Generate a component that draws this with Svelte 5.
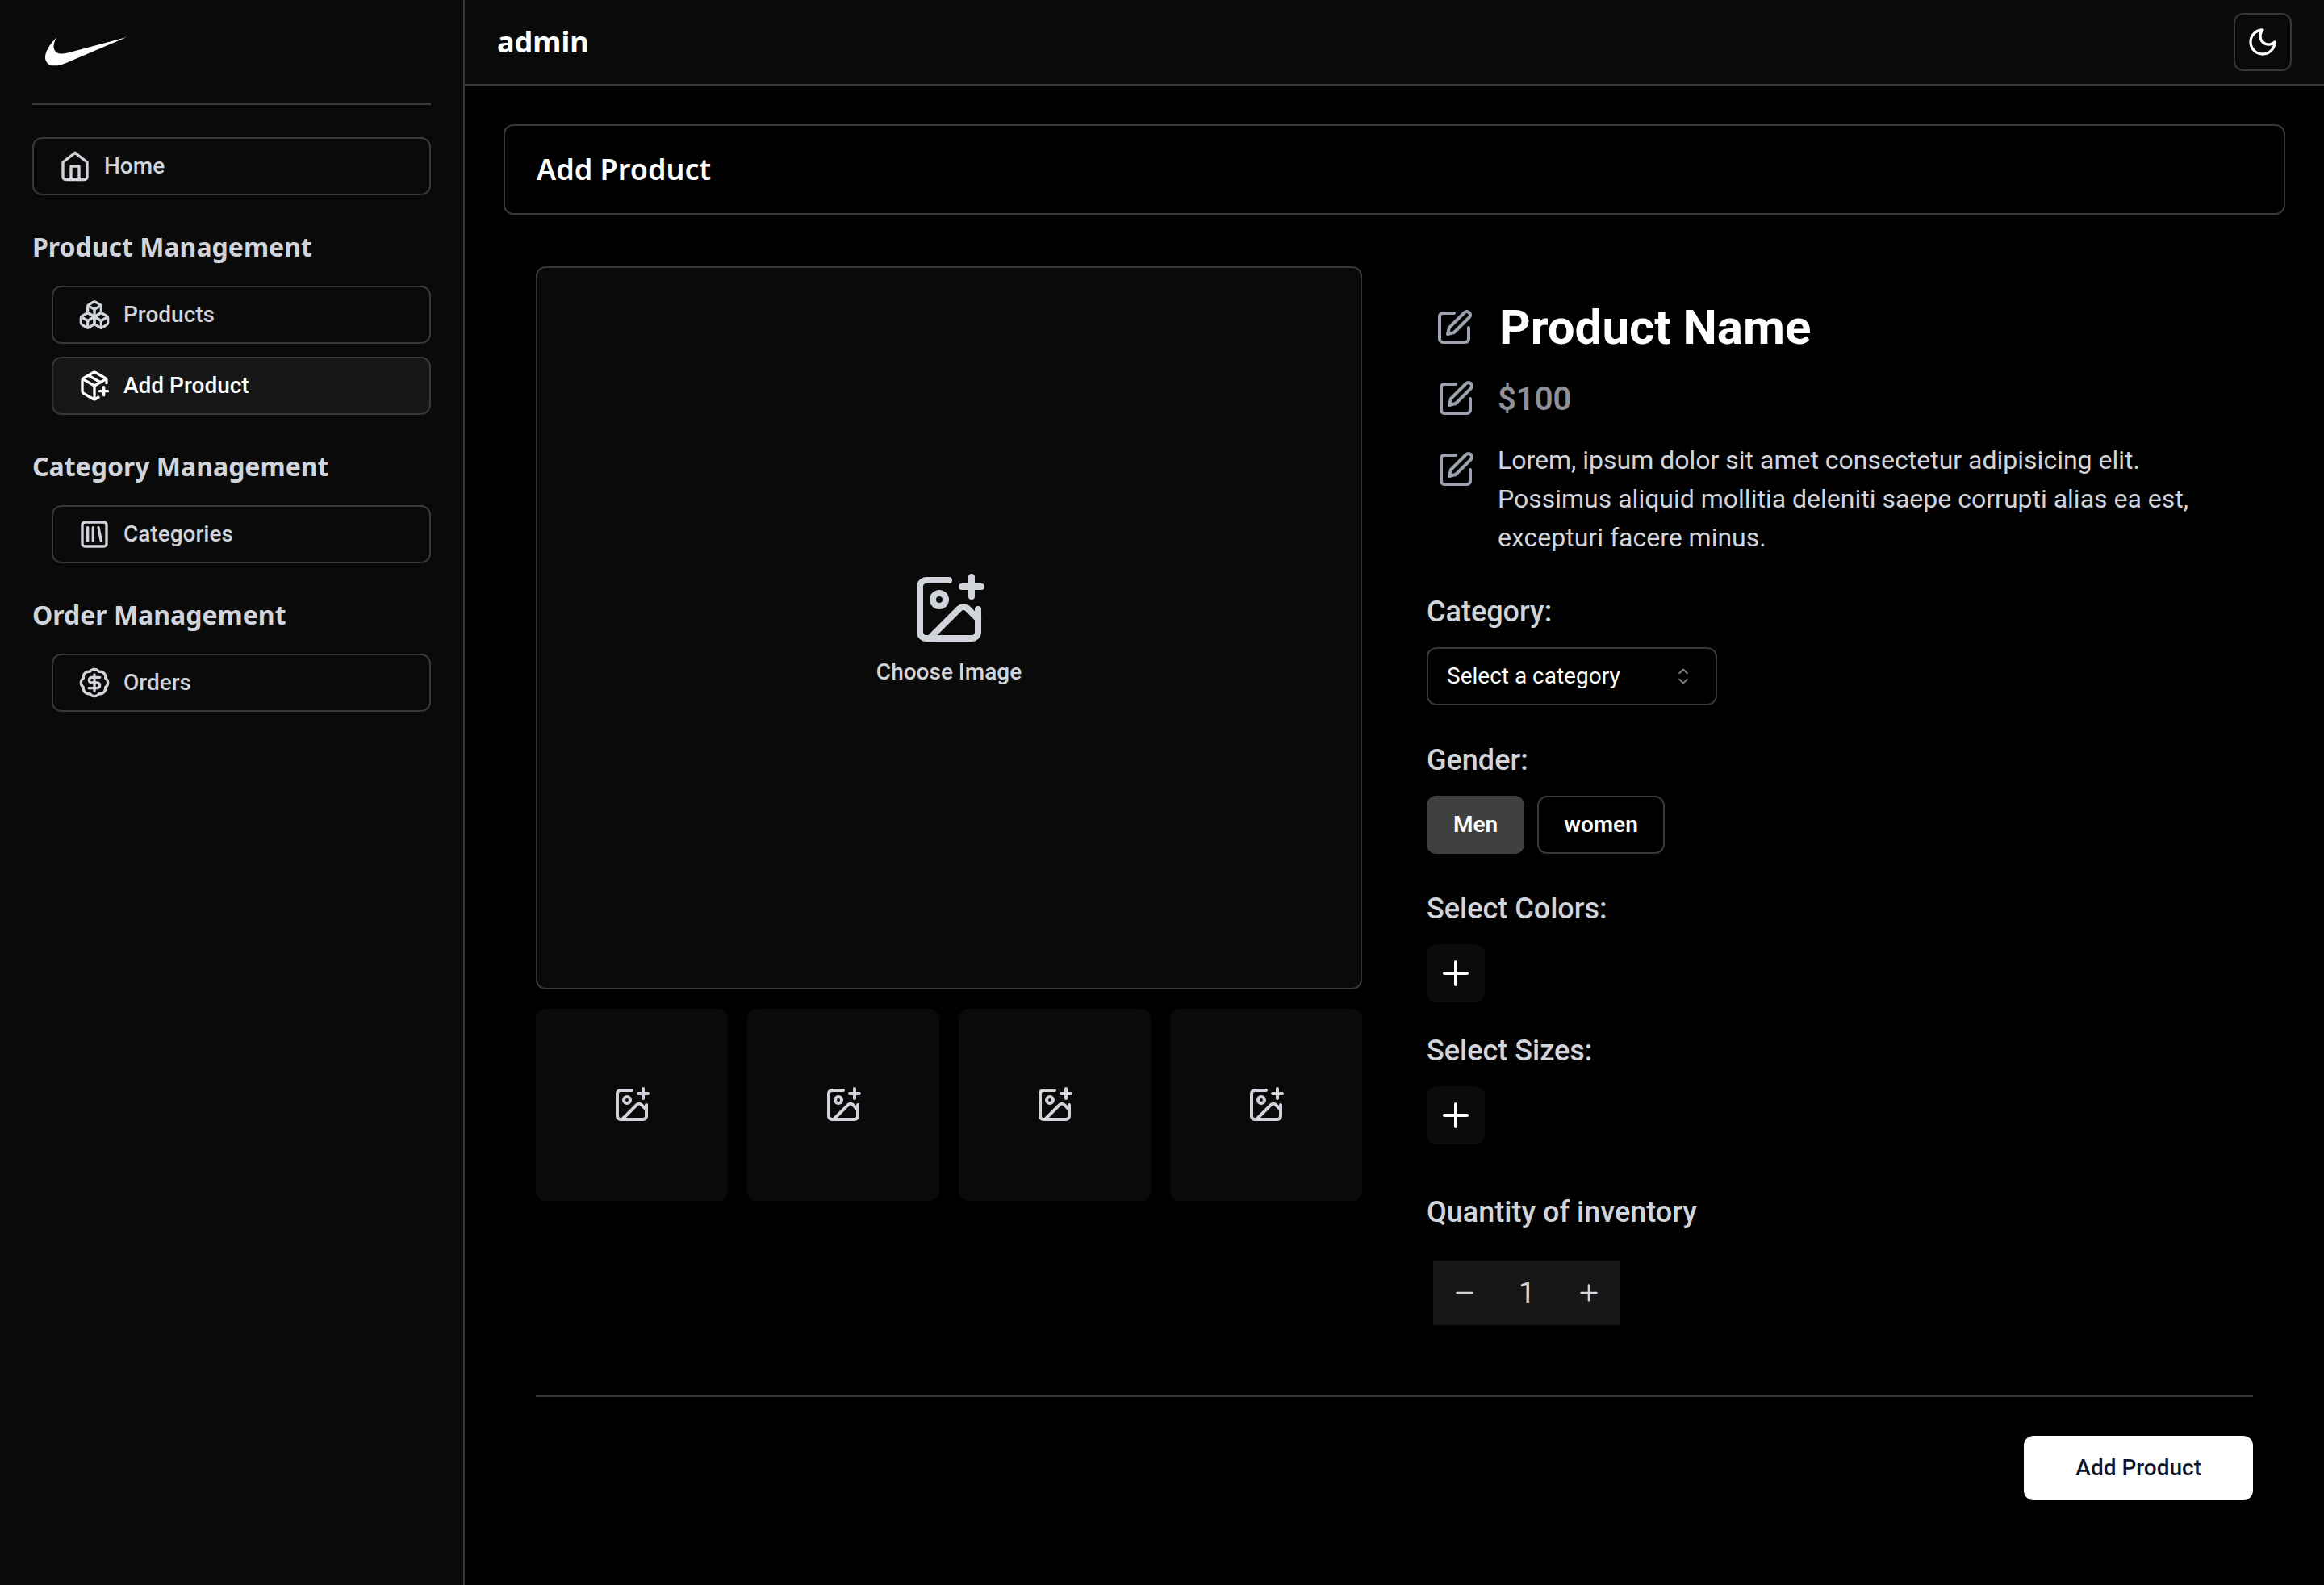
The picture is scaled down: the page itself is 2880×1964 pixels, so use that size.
<script>
  const groups = [
    { title: 'Product Management', items: [
      { label: 'Products', icon: 'boxes' },
      { label: 'Add Product', icon: 'packagePlus', active: true }
    ] },
    { title: 'Category Management', items: [{ label: 'Categories', icon: 'library' }] },
    { title: 'Order Management', items: [{ label: 'Orders', icon: 'badge' }] }
  ];

  const paths = {
    home: ['m3 9 9-7 9 7v11a2 2 0 0 1-2 2H5a2 2 0 0 1-2-2z', 'M9 22V12h6v10'],
    boxes: [
      'M2.97 12.92A2 2 0 0 0 2 14.63v3.24a2 2 0 0 0 .97 1.71l3 1.8a2 2 0 0 0 2.06 0L12 19v-5.5l-5-3-4.03 2.42Z',
      'm7 16.5-4.74-2.85', 'm7 16.5 5-3', 'M7 16.5v5.17',
      'M12 13.5V19l3.97 2.38a2 2 0 0 0 2.06 0l3-1.8a2 2 0 0 0 .97-1.71v-3.24a2 2 0 0 0-.97-1.71L17 10.5l-5 3Z',
      'm17 16.5-5-3', 'm17 16.5 4.74-2.85', 'M17 16.5v5.17',
      'M7.97 4.42A2 2 0 0 0 7 6.13v4.37l5 3 5-3V6.13a2 2 0 0 0-.97-1.71l-3-1.8a2 2 0 0 0-2.06 0l-3 1.8Z',
      'M12 8 7.26 5.15', 'm12 8 4.74-2.85', 'M12 13.5V8'
    ],
    packagePlus: [
      'M16 16h6', 'M19 13v6',
      'M21 10V8a2 2 0 0 0-1-1.73l-7-4a2 2 0 0 0-2 0l-7 4A2 2 0 0 0 3 8v8a2 2 0 0 0 1 1.73l7 4a2 2 0 0 0 2 0l2-1.14',
      'm7.5 4.27 9 5.15', 'M3.29 7 12 12l8.71-5', 'M12 22V12'
    ],
    library: [
      'M5 3h14a2 2 0 0 1 2 2v14a2 2 0 0 1-2 2H5a2 2 0 0 1-2-2V5a2 2 0 0 1 2-2z',
      'M7 7v10', 'M11 7v10', 'm15 7 2 10'
    ],
    badge: [
      'M3.85 8.62a4 4 0 0 1 4.78-4.77 4 4 0 0 1 6.74 0 4 4 0 0 1 4.78 4.78 4 4 0 0 1 0 6.74 4 4 0 0 1-4.77 4.78 4 4 0 0 1-6.75 0 4 4 0 0 1-4.78-4.77 4 4 0 0 1 0-6.76Z',
      'M16 8h-6a2 2 0 1 0 0 4h4a2 2 0 1 1 0 4H8', 'M12 18V6'
    ],
    moon: ['M12 3a6 6 0 0 0 9 9 9 9 0 1 1-9-9Z'],
    imagePlus: [
      'M21 12v7a2 2 0 0 1-2 2H5a2 2 0 0 1-2-2V5a2 2 0 0 1 2-2h7',
      'M16 5h6', 'M19 2v6', 'M7 9a2 2 0 1 0 4 0a2 2 0 1 0-4 0',
      'm21 15-3.086-3.086a2 2 0 0 0-2.828 0L6 21'
    ],
    edit: [
      'M12 3H5a2 2 0 0 0-2 2v14a2 2 0 0 0 2 2h14a2 2 0 0 0 2-2v-7',
      'M18.375 2.625a2.121 2.121 0 1 1 3 3L12 15l-4 1 1-4Z'
    ],
    plus: ['M5 12h14', 'M12 5v14'],
    minus: ['M5 12h14']
  };

  let gender = $state('Men');
  let quantity = $state(1);
</script>

{#snippet icon(name, size)}
  <svg class="icon {size}" viewBox="0 0 24 24" aria-hidden="true">
    {#each paths[name] as d}<path {d} />{/each}
  </svg>
{/snippet}

<div class="app">
  <aside class="sidebar">
    <a class="logo" href="#home" aria-label="Nike">
      <svg viewBox="0 7.8 24 8.4" aria-hidden="true">
        <path d="M24 7.8L6.442 15.276c-1.456.616-2.679.925-3.668.925-1.12 0-1.933-.392-2.437-1.177-.317-.504-.41-1.143-.28-1.918.13-.775.476-1.6 1.036-2.478.467-.71 1.232-1.643 2.297-2.8a6.122 6.122 0 00-.784 1.848c-.28 1.195-.028 2.072.756 2.632.373.261.886.392 1.54.392.522 0 1.11-.084 1.764-.252L24 7.8z" />
      </svg>
    </a>
    <nav>
      <a class="nav-link" href="#home">{@render icon('home', 'md')}Home</a>
      {#each groups as group}
        <h2>{group.title}</h2>
        <div class="group">
          {#each group.items as item}
            <a class="nav-link" class:active={item.active} href="#{item.icon}">
              {@render icon(item.icon, 'md')}{item.label}
            </a>
          {/each}
        </div>
      {/each}
    </nav>
  </aside>

  <div class="main">
    <header>
      <span class="user">admin</span>
      <button class="theme" aria-label="Toggle theme">{@render icon('moon', 'md')}</button>
    </header>

    <main>
      <div class="title"><h1>Add Product</h1></div>

      <form class="content" onsubmit={(e) => e.preventDefault()}>
        <div class="columns">
          <section class="images">
            <button type="button" class="hero">
              {@render icon('imagePlus', 'xl')}
              <span>Choose Image</span>
            </button>
            <div class="thumbs">
              {#each [1, 2, 3, 4] as n}
                <button type="button" class="thumb" aria-label="Choose image {n}">{@render icon('imagePlus', 'lg')}</button>
              {/each}
            </div>
          </section>

          <section class="details">
            <div class="row name-row">
              <button type="button" class="edit" aria-label="Edit name">{@render icon('edit', 'lg')}</button>
              <h2 class="name">Product Name</h2>
            </div>
            <div class="row">
              <button type="button" class="edit" aria-label="Edit price">{@render icon('edit', 'lg')}</button>
              <p class="price">$100</p>
            </div>
            <div class="row">
              <button type="button" class="edit" aria-label="Edit description">{@render icon('edit', 'lg')}</button>
              <p class="description">Lorem, ipsum dolor sit amet consectetur adipisicing elit. Possimus aliquid mollitia deleniti saepe corrupti alias ea est, excepturi facere minus.</p>
            </div>

            <div class="field">
              <label class="label" for="category">Category:</label>
              <div class="select">
                <select id="category">
                  <option>Select a category</option>
                </select>
                <svg viewBox="0 0 15 15" aria-hidden="true">
                  <path d="M4.93179 5.43179C4.75605 5.60753 4.75605 5.89245 4.93179 6.06819C5.10753 6.24392 5.39245 6.24392 5.56819 6.06819L7.49999 4.13638L9.43179 6.06819C9.60753 6.24392 9.89245 6.24392 10.0682 6.06819C10.2439 5.89245 10.2439 5.60753 10.0682 5.43179L7.81819 3.18179C7.73379 3.0974 7.61933 3.04999 7.49999 3.04999C7.38064 3.04999 7.26618 3.0974 7.18179 3.18179L4.93179 5.43179ZM10.0682 9.56819C10.2439 9.39245 10.2439 9.10753 10.0682 8.93179C9.89245 8.75606 9.60753 8.75606 9.43179 8.93179L7.49999 10.8636L5.56819 8.93179C5.39245 8.75606 5.10753 8.75606 4.93179 8.93179C4.75605 9.10753 4.75605 9.39245 4.93179 9.56819L7.18179 11.8182C7.35753 11.9939 7.64245 11.9939 7.81819 11.8182L10.0682 9.56819Z" />
                </svg>
              </div>
            </div>

            <div class="field" role="group" aria-labelledby="gender-label">
              <span class="label" id="gender-label">Gender:</span>
              <div class="options">
                {#each ['Men', 'women'] as option}
                  <button type="button" class="option" class:selected={gender === option} aria-pressed={gender === option} onclick={() => (gender = option)}>{option}</button>
                {/each}
              </div>
            </div>

            <div class="field">
              <span class="label">Select Colors:</span>
              <button type="button" class="add" aria-label="Add color">{@render icon('plus', 'lg')}</button>
            </div>

            <div class="field tight">
              <span class="label">Select Sizes:</span>
              <button type="button" class="add" aria-label="Add size">{@render icon('plus', 'lg')}</button>
            </div>

            <div class="field stock">
              <label class="label" for="quantity">Quantity of inventory</label>
              <div class="stepper">
                <button type="button" aria-label="Decrease" onclick={() => (quantity = Math.max(1, quantity - 1))}>{@render icon('minus', 'sm')}</button>
                <input id="quantity" type="text" inputmode="numeric" bind:value={quantity} />
                <button type="button" aria-label="Increase" onclick={() => (quantity += 1)}>{@render icon('plus', 'sm')}</button>
              </div>
            </div>
          </section>
        </div>

        <div class="footer">
          <button type="submit" class="submit">Add Product</button>
        </div>
      </form>
    </main>
  </div>
</div>

<style>
  :global(body) {
    margin: 0;
    background: #000;
  }

  .app {
    --line: #383838;
    --panel: #0a0a0a;
    --muted: #d1d5db;
    display: grid;
    grid-template-columns: 20% 1fr;
    min-height: 100vh;
    background: #000;
    color: #fff;
    font: 400 28px/40px Roboto, sans-serif;
  }

  .app :global(*) {
    box-sizing: border-box;
  }

  h1, h2, p {
    margin: 0;
  }

  button, input, select {
    margin: 0;
    padding: 0;
    border: 0;
    background: none;
    color: inherit;
    font: inherit;
  }

  button {
    display: flex;
    align-items: center;
    justify-content: center;
    cursor: pointer;
  }

  .icon {
    flex: none;
    fill: none;
    stroke: currentColor;
    stroke-width: 2;
    stroke-linecap: round;
    stroke-linejoin: round;
  }

  .sm { width: 32px; height: 32px; }
  .md { width: 40px; height: 40px; }
  .lg { width: 48px; height: 48px; }
  .xl { width: 96px; height: 96px; }

  .sidebar {
    padding: 0 40px;
    border-right: 2px solid var(--line);
    background: var(--panel);
  }

  .logo {
    display: flex;
    align-items: center;
    height: 130px;
    padding: 0 16px;
    border-bottom: 2px solid var(--line);
  }

  .logo svg {
    width: 101px;
    fill: #fff;
  }

  nav {
    padding-top: 40px;
  }

  nav h2 {
    padding: 42px 0 26px;
    color: var(--muted);
    font: 700 32px/44px "Noto Sans", sans-serif;
  }

  .group {
    display: grid;
    gap: 16px;
    padding-left: 24px;
  }

  .nav-link {
    display: flex;
    align-items: center;
    gap: 16px;
    height: 72px;
    padding: 0 31px;
    border: 2px solid var(--line);
    border-radius: 12px;
    color: var(--muted);
    font-weight: 500;
    text-decoration: none;
  }

  .nav-link.active {
    background: #171717;
    color: #fff;
  }

  header {
    display: flex;
    align-items: center;
    justify-content: space-between;
    height: 106px;
    padding: 0 40px;
    border-bottom: 2px solid var(--line);
    background: var(--panel);
  }

  .user {
    font: 700 36px/56px "Noto Sans", sans-serif;
  }

  .theme {
    width: 72px;
    height: 72px;
    border: 2px solid var(--line);
    border-radius: 12px;
  }

  main {
    padding: 48px;
  }

  .title {
    padding: 26px 39px;
    border: 2px solid var(--line);
    border-radius: 12px;
  }

  h1 {
    font: 600 36px/56px "Noto Sans", sans-serif;
  }

  .content {
    padding: 64px 40px 0;
  }

  .columns {
    display: grid;
    grid-template-columns: 1fr 1fr;
    gap: 80px;
    padding-bottom: 87px;
  }

  .images {
    display: flex;
    flex-direction: column;
    gap: 24px;
    color: var(--muted);
  }

  .hero {
    flex-direction: column;
    gap: 14px;
    height: 896px;
    border: 2px solid var(--line);
    border-radius: 12px;
    background: var(--panel);
    font-weight: 500;
    line-height: 32px;
  }

  .thumbs {
    display: grid;
    grid-template-columns: repeat(4, 1fr);
    gap: 24px;
  }

  .thumb {
    aspect-ratio: 1;
    border-radius: 12px;
    background: var(--panel);
  }

  .details {
    padding-top: 40px;
    color: var(--muted);
  }

  .row {
    display: flex;
    gap: 16px;
  }

  .row + .row {
    margin-top: 16px;
  }

  .edit {
    flex: none;
    width: 72px;
    height: 72px;
    color: #9ca3af;
  }

  .name-row {
    gap: 22px;
  }

  .name-row .edit {
    width: 68px;
  }

  .name {
    color: #fff;
    font-size: 60px;
    font-weight: 700;
    line-height: 72px;
  }

  .price {
    color: #8f9196;
    font-size: 40px;
    font-weight: 600;
    line-height: 74px;
    height: 72px;
  }

  .description {
    font-size: 32px;
    line-height: 48px;
  }

  .field {
    display: flex;
    flex-direction: column;
    align-items: flex-start;
    gap: 16px;
    margin-top: 40px;
  }

  .field.tight {
    margin-top: 32px;
  }

  .field.stock {
    gap: 32px;
    margin-top: 56px;
  }

  .label {
    font-size: 36px;
    font-weight: 500;
    line-height: 56px;
  }

  .select {
    display: grid;
    width: 360px;
    color: #fff;
  }

  .select > * {
    grid-area: 1 / 1;
  }

  .select select {
    height: 72px;
    padding: 0 23px;
    border: 2px solid var(--line);
    border-radius: 12px;
    appearance: none;
  }

  .select svg {
    align-self: center;
    justify-self: end;
    width: 32px;
    margin-right: 26px;
    fill: currentColor;
    opacity: 0.5;
    pointer-events: none;
  }

  .options {
    display: flex;
    gap: 16px;
  }

  .option {
    height: 72px;
    padding: 0 31px;
    border: 2px solid var(--line);
    border-radius: 12px;
    color: #fff;
    font-weight: 600;
  }

  .option.selected {
    border-color: #404040;
    background: #404040;
  }

  .add {
    width: 72px;
    height: 72px;
    border-radius: 12px;
    background: var(--panel);
    color: #fff;
  }

  .stepper {
    display: grid;
    grid-template-columns: repeat(3, 1fr);
    width: 232px;
    height: 80px;
    margin-left: 8px;
    background: #171717;
  }

  .stepper input {
    min-width: 0;
    font-size: 36px;
    text-align: center;
  }

  .footer {
    display: flex;
    justify-content: flex-end;
    padding-top: 48px;
    border-top: 2px solid var(--line);
  }

  .submit {
    height: 80px;
    padding: 0 64px;
    border-radius: 12px;
    background: #fff;
    color: #0f172a;
    font-weight: 500;
  }
</style>
